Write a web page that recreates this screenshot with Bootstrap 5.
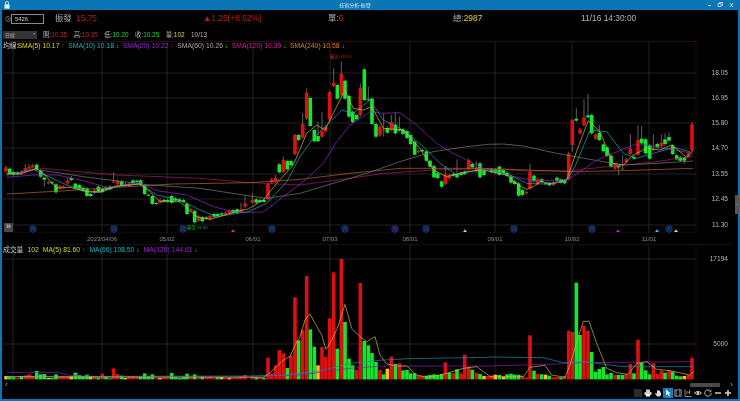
<!DOCTYPE html>
<html lang="zh-Hant">
<head>
<meta charset="utf-8">
<title>技術分析-振發</title>
<link rel="stylesheet" href="https://cdn.jsdelivr.net/npm/bootstrap@5.3.0/dist/css/bootstrap.min.css">
<style>
html,body{margin:0;background:#000;overflow:hidden}
body{font-family:"Liberation Sans","Noto Sans CJK TC",sans-serif;color:#b4b4b4}
.frame{width:740px;height:401px;border:solid #0b76b4;border-width:0 2px 2px 2px;filter:blur(.3px)}
.tbar{height:10px;background:#0b76b4;margin:0 -2px;padding:0 4px;font-size:5px;color:#cfe6f5;line-height:10px}
.tbar-title{flex:1;text-align:center;transform:translateX(-3px)}
.head1{height:17px;font-size:8.4px;line-height:1}
.head2{height:14px;font-size:6.4px;line-height:1;padding-top:2px}
.cw1{width:9px;padding-left:3px}.cw2{width:33px}.cw3{width:21px;margin-left:11px;color:#aaa}
.cw4{width:127px;color:#c01818}.cw5{width:125px;color:#c01818}.cw6{width:125px;color:#aaa}.cw7{width:128px;color:#aaa}
.symbol{height:10px;border:1px solid #8a8a8a;font-size:5.8px;line-height:8px;padding-left:3px;color:#ccc;background:#000}
.pick{width:34px;height:8px;margin:0 6px 0 1px;background:#333;color:#aaa;font-size:5px;line-height:8px;padding:0 2px}
.pick-arrow{width:0;height:0;border:1.5px solid transparent;border-top:2px solid #999;margin-top:2px}
.vals{gap:6.5px}
.up{color:#d02020}.dn{color:#18e030}.yl{color:#d8d820}.cy{color:#16b4c4}.pu{color:#a020d8}.gy{color:#a8a8a8}.mg{color:#d81c98}.og{color:#e87c20}.wt{color:#c8c8c8}
.panel-price{height:192px}.panel-dates{height:11px}.panel-vol{height:136px}
.canvas{display:block;width:736px;height:100%}
.legend{position:absolute;left:1px;top:0;font-size:6.8px;line-height:9px;white-space:nowrap}
.lg-price{top:0;column-gap:3.5px}.lg-vol{top:1px;column-gap:4px}
.lg-first{margin-right:-4.5px}
.foot{height:19px;position:relative;font-size:8px;line-height:8px;color:#aaa}
.tick{fill:#b4b4b4;font-size:6.6px;font-family:"Liberation Sans",sans-serif}
.dates{fill:#8a8a8a;font-size:6px;font-family:"Liberation Sans",sans-serif}
.mini{font-size:4.4px;font-family:"Liberation Sans","Noto Sans CJK TC",sans-serif}
.ring{font-size:4px;font-family:"Noto Sans CJK TC",sans-serif;fill:#3b7ed8}
.ffwd{position:absolute;left:2px;bottom:1px;width:9px;height:9px;background:#484848;color:#e4e4e4;font-size:9px;line-height:7px;text-align:center}
.grab{position:absolute;right:-1px;top:154px;width:4px;height:19px;background:#555;color:#ccc;font-size:4px;line-height:19px;text-align:center}
.scr-l{position:absolute;left:3px;top:1px}
.scr-r{position:absolute;right:5px;top:1px}
.scr-thumb{position:absolute;left:688px;top:3px;width:30px;height:4px;background:#4a4a4a;border-radius:1px}
.tools{position:absolute;right:5px;bottom:1px;height:10px}
.tool{width:10px;height:10px;display:flex;align-items:center;justify-content:center}
.tool-on{background:#0f7fc4}
</style>
</head>
<body>
<div class="frame d-flex flex-column position-relative">
  <div class="tbar d-flex align-items-center">
    <svg width="6" height="8" viewBox="0 0 6 8"><rect x=".5" y="3.4" width="5" height="4.2" fill="#dff"/><path d="M1.5 3.5V2a1.5 1.5 0 0 1 3 0v1.5" fill="none" stroke="#dff" stroke-width=".8"/></svg>
    <div class="tbar-title">技術分析-振發</div>
    <svg width="30" height="8" viewBox="0 0 30 8" fill="none" stroke="#cfe6f5" stroke-width=".8"><path d="M2 4.5h3M12 2.5h3v3h-3zM13.5 2.5V1.5h3v3h-1M24 2l3 4M27 2l-3 4"/></svg>
  </div>
  <div class="head1 d-flex align-items-center">
    <div class="cw1 d-flex"><svg width="6" height="6" viewBox="0 0 6 6"><circle cx="3" cy="3" r="2.5" fill="none" stroke="#999" stroke-width=".6"/><path d="M2.3 1.6 4 3 2.3 4.4" fill="none" stroke="#999" stroke-width=".6"/></svg></div>
    <div class="cw2 symbol">5426</div>
    <div class="cw3">振發</div>
    <div class="cw4">15.75</div>
    <div class="cw5">▲1.25(+8.62%)</div>
    <div class="cw6">單:<span class="up">6</span></div>
    <div class="cw7">總:<span class="yl">2987</span></div>
    <div class="cw8">11/16 14:30:00</div>
  </div>
  <div class="head2 d-flex align-items-center">
    <div class="pick d-flex justify-content-between"><span>日線</span><span class="pick-arrow"></span></div>
    <div class="d-flex vals">
      <span>開:<span class="up">10.35</span></span>
      <span>高:<span class="up">10.35</span></span>
      <span>低:<span class="dn">10.20</span></span>
      <span>收:<span class="dn">10.25</span></span>
      <span>量:<span class="yl">102</span></span>
      <span>10/13</span>
    </div>
  </div>
  <div class="panel-price position-relative">
    <svg id="price" class="canvas" viewBox="2 41 736 192"></svg>
    <div class="legend lg-price d-flex">
      <span class="wt lg-first">均線:</span>
      <span class="yl">SMA(5) 10.17 <span class="up">↑</span></span>
      <span class="cy">SMA(10) 10.18 <span class="dn">↓</span></span>
      <span class="pu">SMA(20) 10.22 <span class="up">↑</span></span>
      <span class="gy">SMA(60) 10.26 <span class="dn">↓</span></span>
      <span class="mg">SMA(120) 10.39 <span class="dn">↓</span></span>
      <span class="og">SMA(240) 10.58 <span class="dn">↓</span></span>
    </div>
    <div class="ffwd">»</div>
    <div class="grab">‹</div>
  </div>
  <div class="panel-dates">
    <svg id="dates" class="canvas" viewBox="2 233 736 11"></svg>
  </div>
  <div class="panel-vol position-relative">
    <svg id="vol" class="canvas" viewBox="2 244 736 136"></svg>
    <div class="legend lg-vol d-flex">
      <span class="wt">成交量</span>
      <span class="yl">102</span>
      <span class="yl">MA(5) 81.60 <span class="up">↑</span></span>
      <span class="cy">MA(66) 108.50 <span class="dn">↓</span></span>
      <span class="pu">MA(120) 144.61 <span class="dn">↓</span></span>
    </div>
  </div>
  <div class="foot">
    <span class="scr-l">‹</span>
    <div class="scr-thumb"></div>
    <span class="scr-r">›</span>
    <div class="tools d-flex">
      <div class="tool"><svg width="8" height="8" viewBox="0 0 8 8"><rect x="0" y="0" width="8" height="8" fill="#2a2a2a"/></svg></div>
      <div class="tool"><svg width="8" height="8" viewBox="0 0 8 8" fill="#ccc"><rect x="2" y="0.5" width="4" height="2.5"/><rect x="0.5" y="3" width="7" height="3"/><rect x="2" y="5" width="4" height="2.5" fill="#fff"/></svg></div>
      <div class="tool"><svg width="8" height="8" viewBox="0 0 8 8" fill="#ddd"><path d="M1 4.5 2 4l1 1V1.5h1V1h.6v.5h.8V2h.8v1.5H7V6L6 7.5H3z"/></svg></div>
      <div class="tool tool-on"><svg width="8" height="8" viewBox="0 0 8 8" fill="#fff"><path d="M2 .5v6l1.6-1.4L5 7.6l1-.5-1.3-2.4 2-.2z"/></svg></div>
      <div class="tool"><svg width="8" height="8" viewBox="0 0 8 8" fill="none" stroke="#aaa" stroke-width=".8"><path d="M.8.8h6.4v6.4H.8zM2.2.8v6.4M5.8.8v6.4"/></svg></div>
      <div class="tool"><svg width="8" height="8" viewBox="0 0 8 8" fill="none" stroke="#aaa" stroke-width=".8"><path d="M1 .5V7.5H7.5M3 5V2M5.5 5V1M4.2 4.2l2-2"/></svg></div>
      <div class="tool"><svg width="8" height="8" viewBox="0 0 8 8" fill="none" stroke="#ccc" stroke-width=".9"><path d="M.5 4Q4 .8 7.5 4 4 7.2.5 4z"/><circle cx="4" cy="4" r="1" fill="#ccc"/></svg></div>
      <div class="tool"><svg width="8" height="8" viewBox="0 0 8 8" fill="none" stroke="#ccc" stroke-width=".9"><path d="M6.6 2.2A3.2 3.2 0 1 0 7.2 4"/><path d="M7 .8v2H5" stroke-width=".6"/></svg></div>
      <div class="tool"><svg width="8" height="8" viewBox="0 0 8 8"><rect x="1" y="3.2" width="6" height="1.6" fill="#bbb"/></svg></div>
      <div class="tool"><svg width="8" height="8" viewBox="0 0 8 8" fill="#ccc"><rect x="1" y="3.2" width="6" height="1.6"/><rect x="3.2" y="1" width="1.6" height="6"/></svg></div>
    </div>
  </div>
</div>
<script src="https://cdn.jsdelivr.net/npm/bootstrap@5.3.0/dist/js/bootstrap.bundle.min.js"></script>
<script>
(function(){
var R='#dc1010',G='#12e82c',Y='#f0c020';
// Candles, written as [x, top, bottom, colour, high, low] in zoomed (3x) coordinates per region
var A=[[18,322,334,R,316],[29,326,340,G],[40,336,344,G],[52,338,343,G],[64,336,342,R],[76,324,335,R,312],[87,320,326,R,312],[98,316,322,R],[110,314,330,G],[122,332,350,G],[133,353,359,G,350,380],[145,366,370,R],[156,367,370,G],[168,373,397,G],[180,378,384,R],[191,379,382,R],[203,362,370,R,355],[214,354,360,G,348],[226,371,384,G],[238,375,386,G],[249,383,392,G],[261,385,408,G],[272,402,408,G],[284,391,398,R],[295,380,394,G],[307,386,396,G],[318,383,388,G],[330,380,388,G],[341,364,367,R,336,370],[353,363,372,R],[365,364,376,G],[376,372,376,R],[388,371,378,R],[399,361,369,G],[411,362,366,G],[422,361,374,G],[434,376,402,G],[445,404,406,G],[457,408,432,G],[469,429,431,G],[480,420,428,R],[492,420,424,G],[503,420,424,G],[515,408,428,G],[526,415,422,G],[538,418,424,G],[550,420,426,G],[561,431,462,G],[573,448,452,R],[584,453,487,G],[596,470,482,R],[607,472,484,G],[619,472,476,G],[630,468,478,R],[642,462,470,G],[653,462,468,G],[665,460,464,G],[676,458,463,R],[688,452,460,R],[699,450,458,G],[711,448,458,G],[723,448,456,R,428],[735,430,440,R,408]];
var B=[[7,420,428,R,400],[19,418,428,G],[30,420,426,G],[42,420,426,G],[54,372,418,R],[65,358,368,R],[77,354,365,R,345],[88,313,337,G],[100,300,335,R,290],[112,303,328,G],[123,303,316,G],[135,225,282,R],[146,225,240,G],[158,192,233,R,160],[170,98,176,R,85],[181,114,198,G],[193,210,244,G],[204,228,244,G,185],[216,214,230,R,155],[227,200,214,R],[239,96,178,R],[251,68,78,R,25],[262,75,116,G],[274,42,106,R,5],[285,62,116,G],[297,108,170,G],[308,155,186,G],[320,165,178,G],[331,84,166,R,70],[343,28,120,G],[355,118,120,G,80],[366,116,192,G],[378,192,230,G],[390,200,226,R],[401,209,211,R,160,230],[412,204,218,G],[424,186,210,R,165],[436,194,220,G,155],[448,208,212,G,170],[459,208,222,G],[471,213,234,G],[482,225,252,G],[494,245,284,G],[506,272,276,R],[517,270,274,G],[529,274,302,G],[540,302,320,G],[552,318,352,G],[563,340,354,G],[575,364,380,G],[586,344,372,R,318],[598,345,355,R],[610,342,347,G],[621,342,352,G,298],[633,338,345,G],[644,335,342,G],[656,300,328,R],[667,312,322,G],[679,322,334,R,305],[690,310,352,G],[702,332,345,G]];
var C=[[5,328,336,G],[16,328,338,G],[28,320,344,G],[40,330,340,G],[51,338,348,G],[63,349,368,G],[74,364,372,G],[86,370,407,G],[97,390,405,G],[109,396,400,R],[120,335,385,R,312],[132,347,364,G],[143,358,372,R],[155,358,366,G],[167,370,372,G],[178,370,376,G],[190,368,374,R],[201,353,362,G],[213,358,368,G],[224,362,370,G],[236,280,358,R],[247,180,255,R,178,275],[259,176,182,G,145],[270,208,220,R],[282,172,196,R,118],[294,166,172,G,102],[305,165,220,G],[317,224,236,R],[328,218,240,G,195],[340,253,274,G],[351,262,288,G],[363,287,320,G],[375,312,326,R],[386,316,322,G,316,345],[398,325,328,R,286],[409,298,306,R],[421,265,282,R,222],[432,290,296,G],[444,240,284,R,196],[455,236,250,G,198],[467,238,280,G],[479,256,296,G],[490,266,270,R,222],[502,252,262,G],[514,248,258,R,224],[525,238,252,G,220],[537,231,242,G,216],[548,256,282,G],[560,286,298,G],[571,292,302,G],[583,292,302,G,292,312],[595,280,290,R],[606,193,270,R,186]];
// Volume bar tops, same x slots, baseline 418 (zoomed)
var VA=[[18,408,Y],[29,410,G],[41,412,G],[52,414,R],[64,408,G],[76,406,R],[87,403,R],[98,408,R],[110,393,G],[122,403,G],[133,402,G],[145,414,Y],[156,414,G],[168,403,G],[180,409,R],[191,409,R],[203,410,R],[214,409,Y],[226,398,G],[238,405,G],[249,408,G],[261,404,G],[272,409,Y],[284,408,R],[295,413,G],[307,401,R],[318,410,G],[330,415,G],[341,385,R],[353,402,R],[365,407,G],[376,414,Y],[388,408,R],[399,408,R],[411,410,R],[422,410,G],[434,400,G],[445,410,G],[457,403,G],[469,415,R],[480,414,Y],[492,412,R],[503,412,R],[515,399,G],[526,412,G],[538,414,G],[550,412,G],[561,401,G],[573,412,R],[584,403,G],[596,414,R],[607,410,G],[619,412,R],[630,411,R],[642,414,R],[653,412,G],[665,411,Y],[676,414,R],[688,414,Y],[699,414,R],[711,412,R],[723,408,R],[735,405,R]];
var VB=[[7,408,R],[19,412,G],[30,412,R],[42,413,G],[54,353,R],[65,400,R],[77,376,R],[88,330,R],[100,340,R],[112,384,G],[123,346,R],[135,172,R],[146,301,G],[158,270,R],[170,108,R],[181,268,G],[193,320,G],[204,376,Y],[216,321,R],[227,350,R],[239,235,R],[251,97,R],[262,326,G],[274,57,R],[285,246,G],[297,356,G],[308,376,G],[320,390,R],[331,129,R],[343,303,G],[355,316,G],[366,339,G],[378,366,G],[390,390,R],[401,403,G],[412,386,Y],[424,350,R],[436,372,G],[448,370,R],[459,391,G],[471,390,G],[482,400,G],[494,400,G],[506,407,R],[517,407,R],[529,407,G],[540,405,G],[552,403,G],[563,405,G],[575,402,G],[586,367,R],[598,398,G],[610,400,R],[621,388,G],[633,400,R],[644,344,R],[656,380,R],[667,389,G],[679,398,R],[690,402,G],[702,408,Y],[714,408,R]];
var VC=[[5,406,R],[16,404,Y],[28,405,G],[40,410,Y],[51,403,G],[63,401,G],[74,404,G],[86,404,G],[97,408,R],[109,412,R],[120,286,R],[132,392,G],[143,402,R],[155,403,G],[167,404,Y],[178,407,G],[190,412,R],[201,411,R],[213,412,G],[224,408,R],[236,272,R],[247,276,R],[259,128,G],[270,285,G],[282,258,R],[294,273,R],[305,336,G],[317,395,G],[328,387,G],[340,381,G],[351,403,G],[363,399,G],[375,405,R],[386,405,G],[398,405,G],[409,402,R],[421,372,R],[432,400,G],[444,299,R],[455,369,G],[467,391,G],[479,403,G],[490,370,R],[502,402,R],[514,392,R],[525,398,G],[537,390,R],[548,395,G],[560,407,G],[571,409,G],[583,408,Y],[595,405,R],[606,353,R]];
function px(o,zx){return o+zx/3}
function py(zy){return +(60+zy/3).toFixed(2)}
function vy(zy){return +(240+zy/3).toFixed(2)}
function line(x1,y1,x2,y2,c,w){return '<line x1="'+x1+'" y1="'+y1+'" x2="'+x2+'" y2="'+y2+'" stroke="'+c+'" stroke-width="'+(w||.7)+'"/>'}
var GRID='#303030',EDGE='#401018';
var vx=[13,102,167,253,330,410,495,572,649];
var s='';
[73,98,123,148,174,199,225].forEach(function(y){s+=line(3,y,696,y,GRID)});
vx.forEach(function(x){s+=line(x,41,x,233,GRID)});
s+=line(3,41.5,696,41.5,EDGE)+line(3,233,696,233,EDGE)+line(696,41,696,233,EDGE);
function candles(list,o){list.forEach(function(c){var x=px(o,c[0]),t=py(c[1]),b=py(c[2]);
 var hi=c[4]!==undefined?py(c[4]):t-1.4,lo=c[5]!==undefined?py(c[5]):b+1.2;
 s+=line(x,hi,x,lo,'#8a8a8a',.7);
 s+='<rect x="'+(x-1.8).toFixed(2)+'" y="'+t+'" width="3.6" height="'+Math.max(b-t,1).toFixed(2)+'" fill="'+c[3]+'"/>';});}
candles(A,0);candles(B,250);candles(C,490);
function poly(segs,fy,c,w){var p=[];segs.forEach(function(g){g[1].forEach(function(q){p.push((g[0]+q[0]/3).toFixed(1)+','+fy(q[1]))})});
 return '<polyline points="'+p.join(' ')+'" fill="none" stroke="'+c+'" stroke-width="'+(w||.7)+'" stroke-linejoin="round"/>'}
var M={
 mg:[[0,[[20,345],[130,325],[350,345],[600,355],[750,368]]],[250,[[150,375],[300,355],[400,340],[550,330],[700,326]]],[490,[[120,333],[240,332],[400,315],[500,305],[610,288]]]],
 og:[[0,[[20,402],[200,392],[350,382],[520,372],[750,368]]],[250,[[150,358],[300,340],[450,325],[700,325]]],[490,[[240,335],[400,332],[610,325]]]],
 gy:[[0,[[120,330],[250,350],[450,375],[600,385],[750,408]]],[250,[[50,415],[150,400],[250,370],[350,340],[450,305],[550,275],[650,260],[715,253]]],[490,[[40,252],[100,258],[200,280],[300,298],[400,315],[500,310],[610,303]]]],
 pu:[[0,[[20,352],[100,345],[170,345],[250,362],[320,382],[420,368],[470,392],[560,405],[640,440],[700,455],[745,457]]],[250,[[40,456],[100,410],[160,365],[220,310],[260,245],[300,195],[360,155],[400,160],[450,158],[500,195],[560,250],[600,275],[660,305],[700,325]]],[490,[[0,330],[80,352],[130,362],[230,360],[270,335],[320,300],[370,280],[430,255],[470,255],[550,270],[610,280]]]],
 cy:[[0,[[20,345],[100,328],[150,352],[200,375],[260,395],[300,398],[350,380],[420,372],[470,405],[540,420],[600,450],[650,470],[745,455]]],[250,[[50,430],[110,365],[150,290],[190,235],[240,185],[275,150],[310,160],[360,120],[400,180],[460,210],[520,260],[570,310],[620,345],[680,330]]],[490,[[0,330],[60,345],[110,370],[160,372],[230,362],[255,320],[300,210],[350,215],[400,280],[440,295],[490,280],[550,262],[600,275]]]],
 yl:[[0,[[20,340],[60,342],[110,325],[135,345],[170,385],[210,382],[260,395],[300,395],[350,378],[420,372],[450,395],[480,425],[540,425],[590,470],[630,478],[720,452],[745,447]]],[250,[[40,420],[80,370],[130,315],[170,220],[200,195],[225,210],[250,160],[285,90],[310,145],[340,150],[365,140],[400,205],[460,210],[510,265],[550,330],[590,350],[650,335],[700,330]]],[490,[[0,335],[50,345],[85,375],[110,388],[130,380],[150,365],[190,372],[230,358],[265,260],[295,182],[330,215],[370,310],[400,315],[430,285],[470,265],[510,270],[545,255],[590,292],[610,270]]]]
};
s+=poly(M.mg,py,'#a81c68')+poly(M.og,py,'#b8662a')+poly(M.gy,py,'#7a7a72')+poly(M.pu,py,'#8f28c8')+poly(M.cy,py,'#1ea8b8')+poly(M.yl,py,'#d8b440');
[[33,0],[114,0],[183,0],[272,0],[345,0],[395,1],[426,0],[514,0],[592,0],[669,0]].forEach(function(r){var c=r[1]?'#7a20b8':'#1c50a8';
 s+='<circle cx="'+r[0]+'" cy="229" r="3.3" fill="#06122c" stroke="'+c+'" stroke-width=".7"/><text class="ring" x="'+r[0]+'" y="230.5" text-anchor="middle">月</text>'});
[[233,'#e0209a'],[465,'#c8c8c8'],[618,'#b020e0'],[657,'#20c8e0'],[676,'#e8e040']].forEach(function(t){
 s+='<polygon points="'+t[0]+',229.2 '+(t[0]+2)+',232 '+(t[0]-2)+',232" fill="'+t[1]+'"/>'});
s+='<text class="mini" x="187" y="229" fill="#18a028">最低 11.40</text><text class="mini" x="330" y="58" fill="#c02020">最高 18.55</text>';
[[73,'18.05'],[98,'16.95'],[123,'15.80'],[148,'14.70'],[174,'13.55'],[199,'12.45'],[225,'11.30']].forEach(function(t){
 s+='<text class="tick" x="728" y="'+(t[0]+2.4)+'" text-anchor="end">'+t[1]+'</text>'});
document.getElementById('price').innerHTML=s;
var d='';
[[102,'2023/04/06'],[167,'05/02'],[253,'06/01'],[330,'07/03'],[410,'08/01'],[495,'09/01'],[572,'10/02'],[649,'11/01']].forEach(function(t){
 d+='<text class="dates" x="'+t[0]+'" y="241" text-anchor="middle">'+t[1]+'</text>'});
document.getElementById('dates').innerHTML=d;
s='';
[259,344].forEach(function(y){s+=line(3,y,696,y,GRID)});
vx.forEach(function(x){s+=line(x,244,x,380,GRID)});
s+=line(696,244,696,380,EDGE)+line(3,244.3,731,244.3,'#1c1c1c');
function bars(l,o){l.forEach(function(b){var x=px(o,b[0]),t=vy(b[1]);s+='<rect x="'+(x-1.8).toFixed(2)+'" y="'+t+'" width="3.6" height="'+(379.4-t).toFixed(2)+'" fill="'+b[2]+'"/>'})}
bars(VA,0);bars(VB,250);bars(VC,490);
var V={
 pu:[[0,[[20,397],[170,397],[210,406],[300,410],[745,410]]],[250,[[150,405],[300,385],[400,378],[715,378]]],[490,[[0,378],[200,372],[280,368],[610,365]]]],
 cy:[[0,[[20,410],[745,408]]],[250,[[100,405],[200,395],[300,370],[400,360],[480,356],[715,352]]],[490,[[0,351],[160,353],[220,368],[280,365],[400,380],[610,380]]]],
 yl:[[0,[[20,410],[200,411],[745,412]]],[250,[[40,412],[60,398],[80,380],[100,360],[120,350],[135,315],[150,290],[165,240],[180,222],[195,250],[215,285],[228,328],[240,310],[262,265],[285,193],[305,265],[330,290],[350,305],[375,290],[390,345],[410,372],[440,378],[470,378],[500,405],[530,412],[570,405],[590,400],[640,385],[680,380],[700,395],[715,405]]],[490,[[0,410],[100,410],[120,382],[165,376],[185,405],[225,412],[240,375],[265,290],[280,244],[297,244],[320,310],[350,385],[380,398],[415,403],[440,370],[470,365],[500,388],[540,392],[600,405],[610,395]]]]
};
s+=poly(V.pu,vy,'#8a1cb8')+poly(V.cy,vy,'#1c8ea0')+poly(V.yl,vy,'#d8b440');
[[259,'17194'],[344,'5000']].forEach(function(t){s+='<text class="tick" x="728" y="'+(t[0]+2.4)+'" text-anchor="end">'+t[1]+'</text>'});
document.getElementById('vol').innerHTML=s;
})();
</script>
</body>
</html>
